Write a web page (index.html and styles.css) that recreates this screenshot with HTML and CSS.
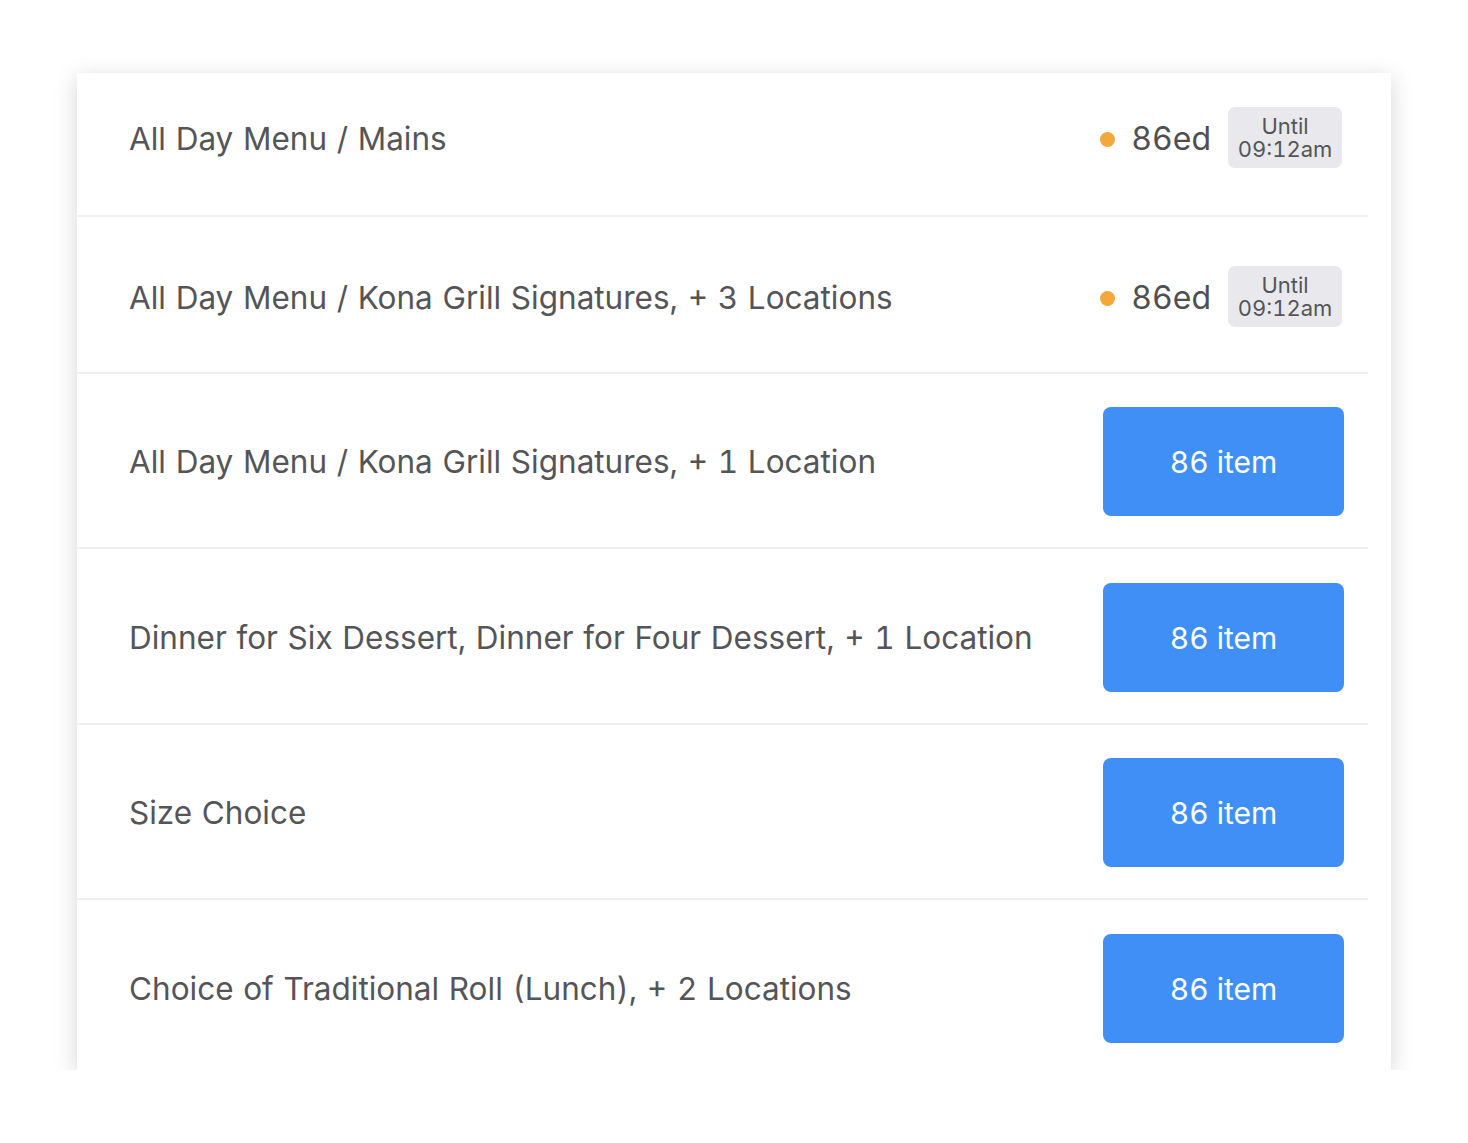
FILE: index.html
```html
<!DOCTYPE html>
<html>
<head>
<meta charset="utf-8">
<link rel="stylesheet" href="styles.css">
</head>
<body>
<div class="card">
  <div class="list">
    <div class="row row-first">
      <div class="name">All Day Menu / Mains</div>
      <div class="status">
        <span class="dot"></span>
        <span class="ed">86ed</span>
        <span class="pill"><span>Until</span><span>09:12am</span></span>
      </div>
    </div>
    <div class="row row-status">
      <div class="name">All Day Menu / Kona Grill Signatures, + 3 Locations</div>
      <div class="status">
        <span class="dot"></span>
        <span class="ed">86ed</span>
        <span class="pill"><span>Until</span><span>09:12am</span></span>
      </div>
    </div>
    <div class="row">
      <div class="name">All Day Menu / Kona Grill Signatures, + 1 Location</div>
      <button class="btn">86 item</button>
    </div>
    <div class="row row-4">
      <div class="name">Dinner for Six Dessert, Dinner for Four Dessert, + 1 Location</div>
      <button class="btn">86 item</button>
    </div>
    <div class="row">
      <div class="name">Size Choice</div>
      <button class="btn">86 item</button>
    </div>
    <div class="row row-last">
      <div class="name">Choice of Traditional Roll (Lunch), + 2 Locations</div>
      <button class="btn">86 item</button>
    </div>
  </div>
</div>
</body>
</html>
```
FILE: styles.css
```css
html, body {
  margin: 0;
  padding: 0;
  background: #ffffff;
}
body {
  font-family: Inter, "Noto Sans", sans-serif;
  font-variant-numeric: tabular-nums;
  padding: 73px 0 0 77px;
}
.card {
  width: 1314px;
  height: 997px;
  background: #ffffff;
  box-shadow: 0 5px 22px rgba(0, 0, 0, 0.17);
  box-sizing: border-box;
  padding-right: 23px;
  overflow: hidden;
}
.list {
  display: flex;
  flex-direction: column;
}
.row {
  display: flex;
  align-items: center;
  justify-content: space-between;
  padding: 33px 24px 31px 52px;
  border-bottom: 2px solid #f0f0f2;
}
.row-first {
  padding-top: 34px;
  padding-bottom: 47px;
  padding-right: 26px;
}
.row-status {
  padding-top: 49px;
  padding-bottom: 45px;
  padding-right: 26px;
}
.row-4 {
  padding-top: 34px;
}
.row-last {
  border-bottom: none;
  padding-top: 34px;
}
.name {
  font-size: 31.5px;
  line-height: 40px;
  color: #555558;
  word-spacing: 1.2px;
}
.row-first .name,
.row-status .name {
  padding-top: 3px;
}
.status {
  display: flex;
  align-items: center;
}
.dot {
  width: 15px;
  height: 15px;
  border-radius: 50%;
  background: #f3a83a;
  margin-right: 16px;
  margin-top: 4px;
}
.ed {
  font-size: 32px;
  line-height: 40px;
  color: #4f4f52;
  margin-right: 17px;
  padding-top: 3px;
}
.pill {
  display: flex;
  flex-direction: column;
  align-items: center;
  justify-content: center;
  width: 114px;
  height: 61px;
  background: #e9e9ed;
  border-radius: 7px;
  font-size: 22px;
  line-height: 23px;
  color: #555558;
}
.btn {
  width: 241px;
  height: 109px;
  border: none;
  border-radius: 8px;
  background: #3f8ff7;
  color: #ffffff;
  font-family: Inter, "Noto Sans", sans-serif;
  font-variant-numeric: tabular-nums;
  font-size: 30px;
  padding: 0;
}
```
